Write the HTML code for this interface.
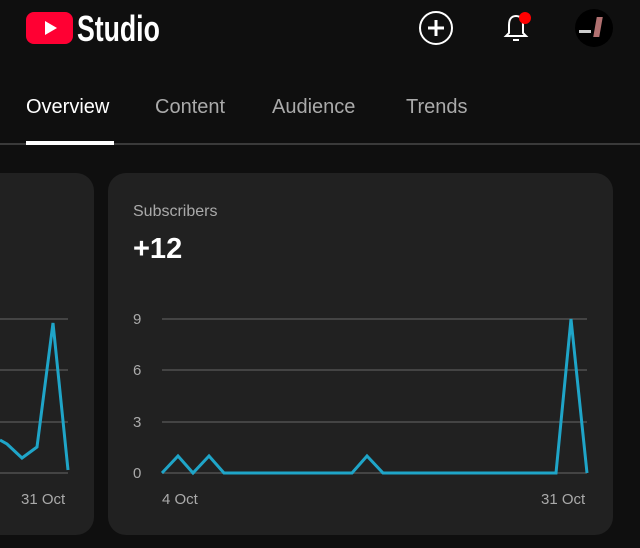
<!DOCTYPE html>
<html><head><style>
body{margin:0;width:640px;height:548px;background:#0f0f0f;overflow:hidden;font-family:"Liberation Sans",Roboto,sans-serif;position:relative}
.a{position:absolute}
.tab{position:absolute;top:96px;font-size:20px;color:#aaa}
.card{position:absolute;top:173px;height:362px;background:#212121;border-radius:18px}
.lab{position:absolute;font-size:15px;color:#aaa}
</style></head><body>
<div class="a" style="left:26px;top:12px;width:47px;height:32px;background:#ff0033;border-radius:8px"></div>
<svg class="a" style="left:26px;top:12px" width="47" height="32"><path d="M19 9 L31 16 L19 23Z" fill="#fff"/></svg>
<div class="a" style="left:77px;top:8px;font-weight:bold;font-size:36px;color:#fff;transform:scaleX(0.74);transform-origin:0 0">Studio</div>
<svg class="a" style="left:418px;top:10px" width="36" height="36"><circle cx="18" cy="18" r="16" fill="none" stroke="#fff" stroke-width="2"/><path d="M18 10v16M10 18h16" stroke="#fff" stroke-width="3"/></svg>
<svg class="a" style="left:498px;top:10px" width="36" height="36"><path d="M18 6c-5 0-7 4-7 9v8l-3 3h20l-3-3v-8c0-5-2-9-7-9z" fill="none" stroke="#fff" stroke-width="2"/><path d="M15 29h6v2h-6z" fill="#fff"/><circle cx="27" cy="8" r="6" fill="#ff0000"/></svg>
<div class="a" style="left:575px;top:9px;width:38px;height:38px;border-radius:50%;background:#000"></div>
<div class="a" style="left:595px;top:17px;width:6px;height:20px;background:#b07070;transform:skewX(-10deg)"></div>
<div class="a" style="left:579px;top:30px;width:12px;height:3px;background:#ccc"></div>
<div class="tab" style="left:26px;color:#fff">Overview</div>
<div class="tab" style="left:155px">Content</div>
<div class="tab" style="left:272px">Audience</div>
<div class="tab" style="left:406px">Trends</div>
<div class="a" style="left:0;top:143px;width:640px;height:2px;background:#3a3a3a"></div>
<div class="a" style="left:26px;top:141px;width:88px;height:4px;background:#fff"></div>
<div class="card" style="left:-30px;width:124px"></div>
<div class="card" style="left:108px;width:505px"></div>
<div class="a" style="left:133px;top:203px;font-size:16px;color:#aaa">Subscribers</div>
<div class="a" style="left:133px;top:233px;font-size:29px;color:#fff;font-weight:bold">+12</div>
<svg class="a" style="left:0;top:0" width="640" height="548">
<g stroke="#444" stroke-width="2"><path d="M0 319H68M0 370H68M0 422H68M0 473H68"/><path d="M162 319H587M162 370H587M162 422H587M162 473H587"/></g>
<g fill="none" stroke="#1fa5c8" stroke-width="3" stroke-linejoin="miter">
<polyline points="0,440 7,444 22,458 37,447 53,323 68,470"/>
<polyline points="162,473 178,456 193,473 209,456 224,473 352,473 367,456 383,473 556,473 571,319 587,473"/>
</g></svg>
<div class="lab" style="left:133px;top:311px">9</div>
<div class="lab" style="left:133px;top:362px">6</div>
<div class="lab" style="left:133px;top:414px">3</div>
<div class="lab" style="left:133px;top:465px">0</div>
<div class="lab" style="left:162px;top:491px">4 Oct</div>
<div class="lab" style="left:541px;top:491px">31 Oct</div>
<div class="lab" style="left:21px;top:491px">31 Oct</div>
</body></html>
